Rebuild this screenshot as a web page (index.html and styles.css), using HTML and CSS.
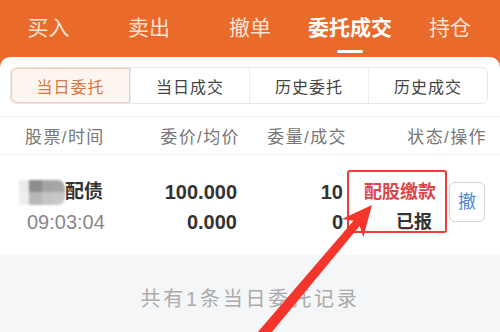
FILE: index.html
```html
<!DOCTYPE html>
<html lang="zh">
<head>
<meta charset="utf-8">
<link rel="stylesheet" href="styles.css">
</head>
<body>
<div class="app">
  <div class="topbar">
    <div class="tab">买入</div>
    <div class="tab">卖出</div>
    <div class="tab">撤单</div>
    <div class="tab active">委托成交<span class="ind"></span></div>
    <div class="tab">持仓</div>
  </div>
  <div class="panel">
    <div class="seg">
      <div class="seg-item on">当日委托</div>
      <div class="seg-item">当日成交</div>
      <div class="seg-item">历史委托</div>
      <div class="seg-item">历史成交</div>
    </div>
    <div class="thead">
      <div>股票/时间</div>
      <div class="r">委价/均价</div>
      <div class="r">委量/成交</div>
      <div class="r">状态/操作</div>
    </div>
    <div class="row">
      <div class="c1">
        <div class="name"><span class="blur"><i class="b1"></i><i class="b2"></i><i class="b3"></i><i class="b4"></i><i class="b5"></i><i class="b6"></i><i class="b7"></i><i class="b8"></i></span>配债</div>
        <div class="time">09:03:04</div>
      </div>
      <div class="c r">
        <div class="strong">100.000</div>
        <div class="strong">0.000</div>
      </div>
      <div class="c r">
        <div class="strong">10</div>
        <div class="strong">0</div>
      </div>
      <div class="c r">
        <div class="status">配股缴款</div>
        <div class="st2">已报</div>
      </div>
      <div class="btncell"><div class="btn">撤</div></div>
    </div>
  </div>
  <div class="foot">共有1条当日委托记录</div>
  <div class="mark"></div>
  <svg class="arrow" width="500" height="332" viewBox="0 0 500 332"><polygon points="372,205 363.3,237 359.6,226 263.3,342.4 254.9,335.4 353.5,220.8 341.9,219" fill="#F4352B"/></svg>
</div>
</body>
</html>
```

FILE: styles.css
```css
* { box-sizing: border-box; margin: 0; padding: 0; }
html, body { width: 500px; height: 332px; overflow: hidden; }
body {
  background: #F5F6F7;
  font-family: "Liberation Sans", "Noto Sans CJK SC", sans-serif;
}
.app { position: relative; width: 500px; height: 332px; background: #F5F6F7; }
.topbar {
  background: #E96A2A;
  height: 67px;
  margin-bottom: -10px;
  display: grid;
  grid-template-columns: repeat(5, 1fr);
}
.tab {
  position: relative;
  text-align: center;
  color: #FBE2D3;
  font-size: 21px;
  line-height: 21px;
  padding-top: 17px;
}
.tab:nth-child(1) { margin-left: -3px; }
.tab:nth-child(2) { margin-left: -2px; }
.tab.active { color: #fff; font-weight: bold; }
.ind {
  position: absolute;
  left: 37px;
  top: 50px;
  width: 26px;
  height: 3px;
  border-radius: 2px;
  background: #fff;
}
.panel {
  position: relative;
  background: #fff;
  border-radius: 10px 10px 0 0;
  padding-top: 10px;
}
.seg {
  margin: 0 12px 0 10px;
  height: 37px;
  display: grid;
  grid-template-columns: repeat(4, 1fr);
  border: 1px solid #E8E8E8;
  border-radius: 6px;
  overflow: hidden;
}
.seg-item {
  display: flex;
  align-items: center;
  justify-content: center;
  font-size: 16px;
  color: #444;
  letter-spacing: 1px;
  border-left: 1px solid #ECECEC;
}
.seg-item:first-child { border-left: none; }
.seg-item.on {
  background: #FDF5EF;
  color: #D8773F;
  box-shadow: inset 0 0 0 1px #ECCDB8;
  border-radius: 6px 0 0 6px;
}
.thead {
  margin-top: 12px;
  border-top: 1px solid #F0F0F0;
  border-bottom: 1px solid #EFEFEF;
  height: 39px;
  display: grid;
  grid-template-columns: 120px 95px 107px 1fr;
  align-items: center;
  padding: 0 13px 0 25px;
  color: #777;
  font-size: 17px;
  letter-spacing: 1.4px;
}
.r { text-align: right; }
.row {
  height: 100px;
  display: grid;
  grid-template-columns: 120px 92px 106px 1fr 49px;
  padding: 22px 15px 0 25px;
  line-height: 30px;
  font-size: 19px;
  color: #333;
}
.name { font-weight: bold; display: flex; align-items: center; color: #333; }
.blur {
  display: inline-grid;
  grid-template-columns: 10px 13px 10px 13px;
  grid-template-rows: 12px 13px;
  width: 46px;
  height: 25px;
  margin-left: -6px;
  filter: blur(1.2px);
  background: #E4E4E4;
  border-radius: 0 8px 8px 0;
  overflow: hidden;
}
.blur i { display: block; }
.b1 { background: #EAEAEA; }
.b2 { background: #8C8C8C; }
.b3 { background: #A4A4A4; }
.b4 { background: #A6A6A6; border-radius: 0 7px 0 0; }
.b5 { background: #EEEEEE; }
.b6 { background: #B8B8B8; }
.b7 { background: #C4C4C4; }
.b8 { background: #C8C8C8; border-radius: 0 0 7px 0; }
.time { color: #888; font-size: 20px; font-weight: normal; margin-left: 2px; }
.strong { font-weight: bold; font-size: 20px; color: #333; }
.status { color: #D9474B; font-weight: bold; font-size: 18px; }
.st2 { font-size: 18px; font-weight: bold; color: #333; margin-right: 4px; }
.btncell { padding-left: 13px; }
.btn {
  margin-top: 5px;
  height: 40px;
  border: 1px solid #CBD6E2;
  border-radius: 6px;
  color: #4A88D0;
  font-size: 18px;
  display: flex;
  align-items: center;
  justify-content: center;
}
.foot {
  text-align: center;
  color: #ABABAB;
  font-size: 20px;
  letter-spacing: 2.8px;
  padding-top: 28px;
}
.mark {
  position: absolute;
  left: 347px;
  top: 170px;
  width: 100px;
  height: 63px;
  border: 2px solid #EE3D36;
  border-radius: 3px;
}
.arrow { position: absolute; left: 0; top: 0; }
```
